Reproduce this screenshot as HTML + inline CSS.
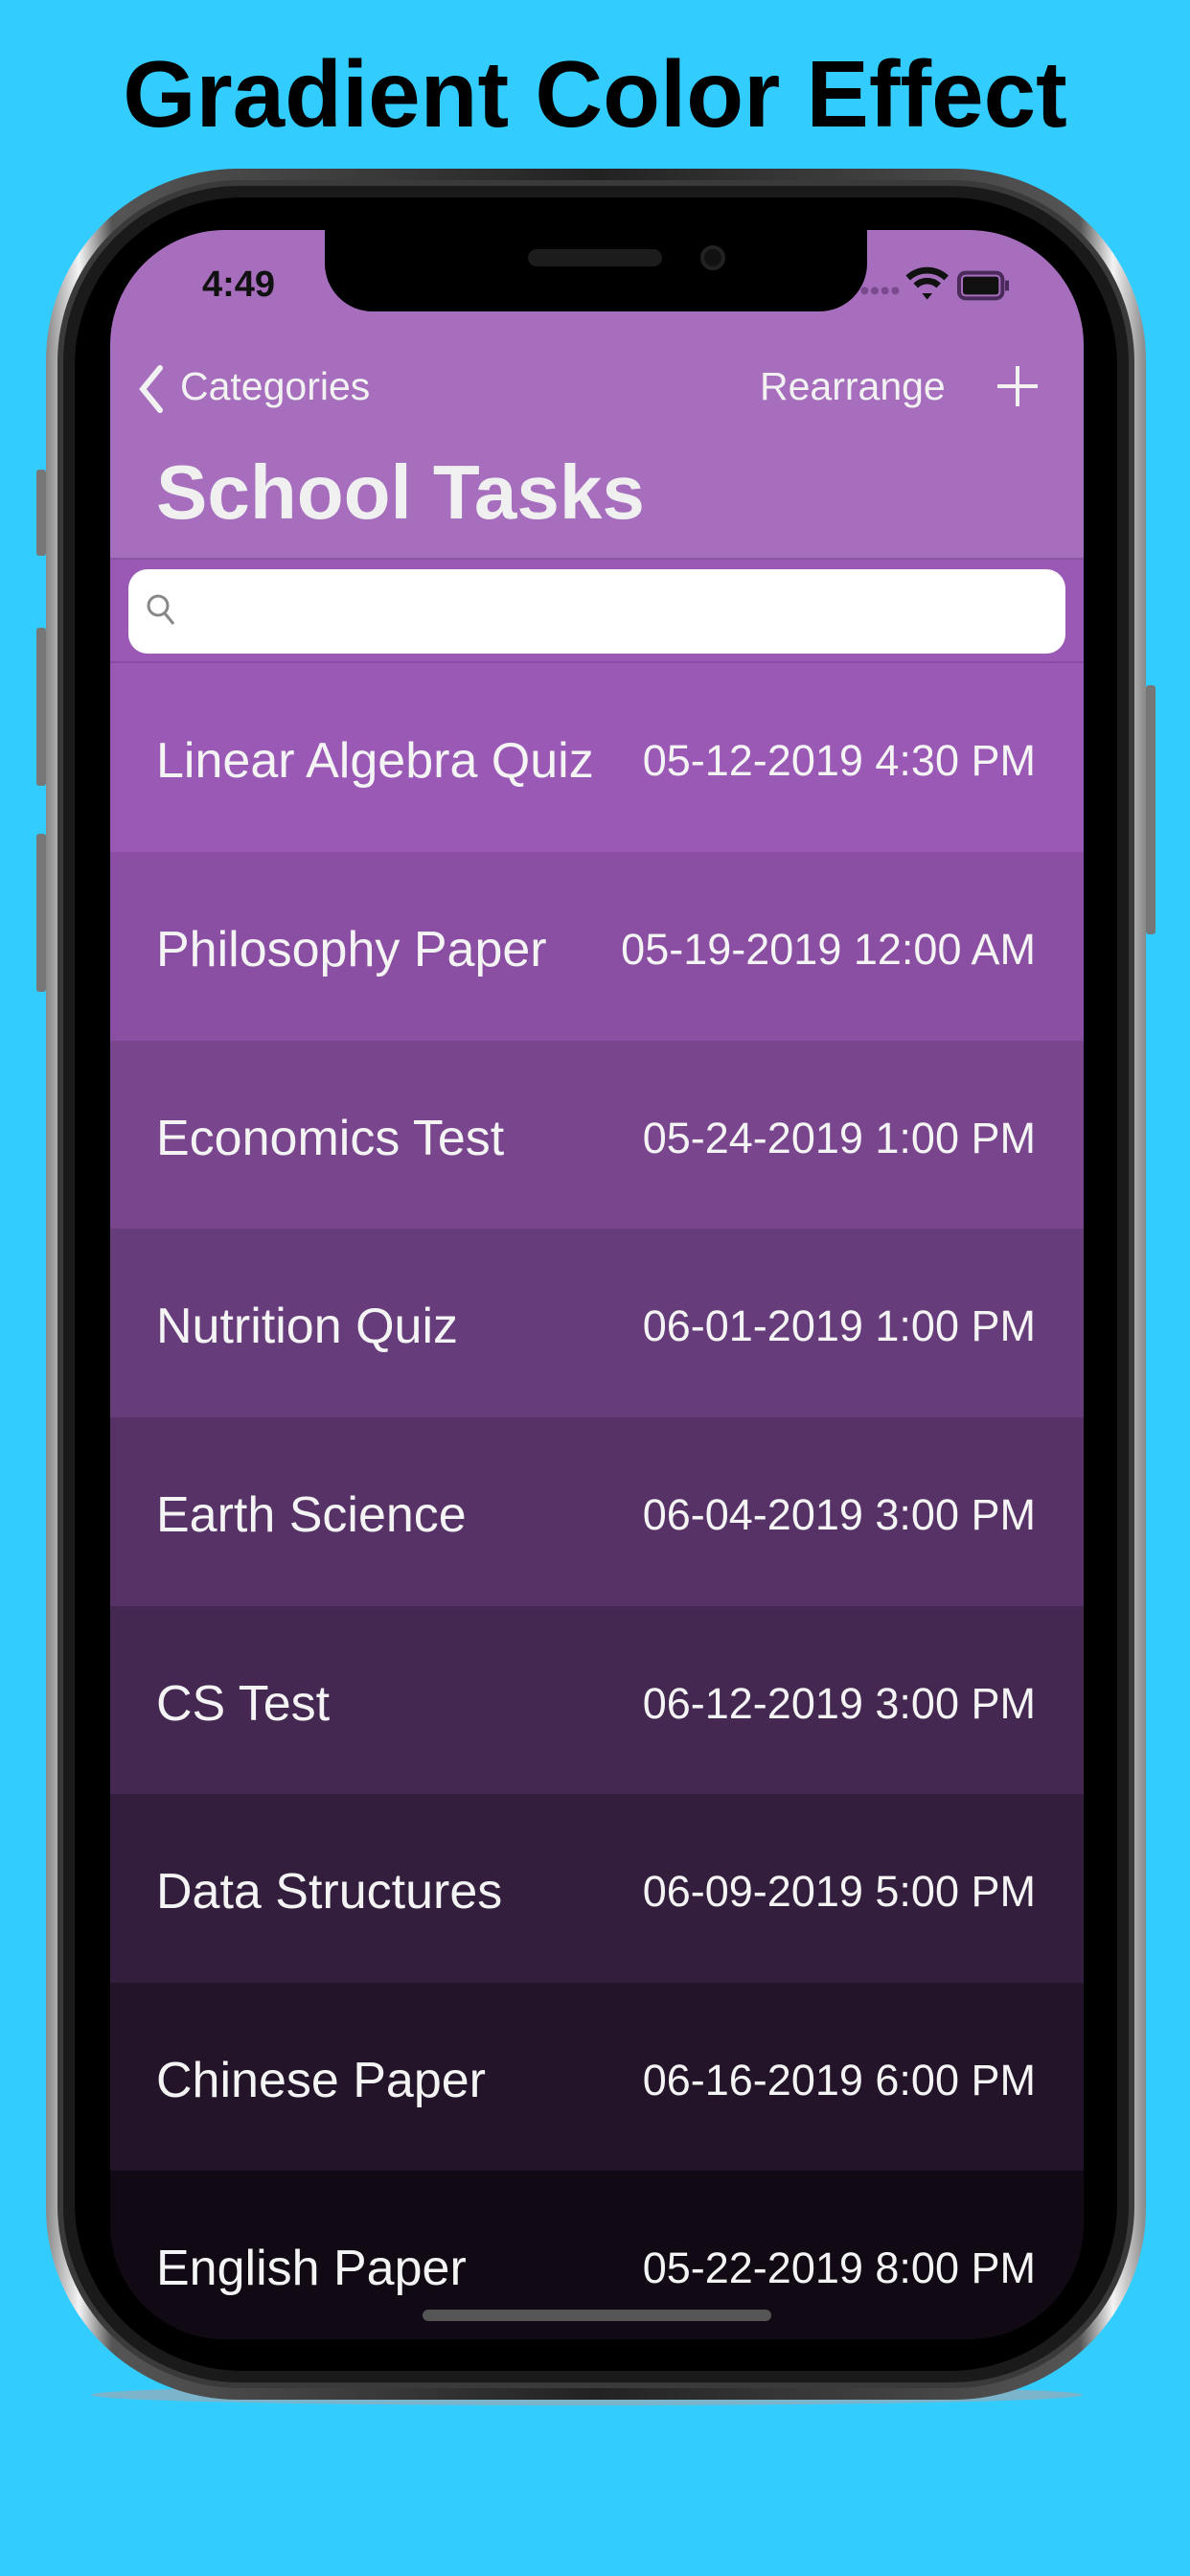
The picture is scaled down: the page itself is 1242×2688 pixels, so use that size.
<!DOCTYPE html>
<html><head><meta charset="utf-8"><style>
*{margin:0;padding:0;box-sizing:border-box}
body{width:1242px;height:2688px;background:#33CCFF;position:relative;overflow:hidden;font-family:"Liberation Sans",sans-serif}
.title{position:absolute;top:42px;left:0;width:1242px;text-align:center;font-weight:bold;font-size:98px;color:#000;letter-spacing:0px}
.shadow{position:absolute;left:95px;top:2488px;width:1035px;height:22px;border-radius:50%;background:#9aaab5;opacity:.7}
.frame{position:absolute;left:48px;top:176px;width:1148px;height:2328px;border-radius:200px;background:linear-gradient(90deg,#888,#f4f4f4 3%,#555 6%,#222 50%,#555 94%,#f4f4f4 97%,#888)}
.frame2{position:absolute;left:60px;top:188px;width:1124px;height:2304px;border-radius:190px;background:#1a1a1a;border:6px solid #3a3a3a}
.frame3{position:absolute;left:78px;top:206px;width:1088px;height:2268px;border-radius:175px;background:#000}
.btn{position:absolute;background:#777;border-radius:3px}
.screen{position:absolute;left:115px;top:240px;width:1016px;height:2201px;border-radius:120px;overflow:hidden;background:#110A14}
.hdr{position:absolute;left:0;top:0;width:1016px;height:344px;background:#A66EBD;border-bottom:2px solid #8c55a3}
.notch{position:absolute;left:224px;top:0;width:566px;height:85px;background:#000;border-radius:0 0 50px 50px}
.spk{position:absolute;left:212px;top:20px;width:140px;height:18px;border-radius:9px;background:#1c1c1c}
.cam{position:absolute;left:392px;top:16px;width:26px;height:26px;border-radius:50%;background:#111;border:4px solid #222}
.time{position:absolute;left:96px;top:36px;font-weight:bold;font-size:38px;color:#111}
.nav{position:absolute;color:#f2f2f2;font-size:41px}
.big{position:absolute;left:48px;top:228px;font-weight:bold;font-size:80px;color:#f0f0f0}
.sbar{position:absolute;left:0;top:344px;width:1016px;height:108px;background:#9B59B6;border-bottom:2px solid #8a4aa5}
.search{position:absolute;left:19px;top:10px;width:978px;height:88px;border-radius:20px;background:#fff}
.row{position:absolute;left:0;width:1016px;height:197px;color:#f4f4f4;font-size:52px}
.row .l{position:absolute;left:48px;top:72px}
.row .r{position:absolute;right:50px;top:76px;font-size:45px}
.home{position:absolute;left:326px;top:2170px;width:364px;height:12px;border-radius:6px;background:#555}
</style></head><body>
<div class="title">Gradient Color Effect</div>
<div class="shadow"></div>
<div class="btn" style="left:38px;top:490px;width:10px;height:90px"></div>
<div class="btn" style="left:38px;top:655px;width:10px;height:165px"></div>
<div class="btn" style="left:38px;top:870px;width:10px;height:165px"></div>
<div class="btn" style="left:1196px;top:715px;width:10px;height:260px"></div>
<div class="frame"></div><div class="frame2"></div><div class="frame3"></div>
<div class="screen">
 <div class="hdr"></div>
 <div class="notch"><div class="spk"></div><div class="cam"></div></div>
 <div class="time">4:49</div>
 <svg style="position:absolute;left:782px;top:34px" width="200" height="48" viewBox="0 0 120 36" preserveAspectRatio="xMinYMin meet">
  <g fill="#7a4a8e"><circle cx="4" cy="22" r="3"/><circle cx="12" cy="22" r="3"/><circle cx="20" cy="22" r="3"/><circle cx="28" cy="22" r="3"/></g>
  <path d="M38 12 A22 22 0 0 1 68 12" stroke="#111" stroke-width="5" fill="none"/>
  <path d="M44 18 A13 13 0 0 1 62 18" stroke="#111" stroke-width="5" fill="none"/>
  <path d="M49 24 L53 29 L57 24 Z" fill="#111"/>
  <rect x="78" y="8" width="34" height="20" rx="5" fill="none" stroke="#4a2a5a" stroke-width="3"/>
  <rect x="81" y="11" width="28" height="14" rx="2" fill="#111"/>
  <rect x="114" y="14" width="3" height="8" fill="#4a2a5a"/>
 </svg>
 <svg style="position:absolute;left:28px;top:140px" width="30" height="52" viewBox="0 0 30 52"><path d="M24 4 L6 26 L24 48" stroke="#f2f2f2" stroke-width="6" fill="none" stroke-linecap="round"/></svg>
 <div class="nav" style="left:73px;top:140px">Categories</div>
 <div class="nav" style="left:678px;top:140px">Rearrange</div>
 <svg style="position:absolute;left:924px;top:140px" width="46" height="46" viewBox="0 0 46 46"><path d="M23 2V44M2 23H44" stroke="#f2f2f2" stroke-width="4"/></svg>
 <div class="big">School Tasks</div>
 <div class="sbar"><div class="search">
  <svg style="position:absolute;left:17px;top:24px" width="40" height="40" viewBox="0 0 40 40"><circle cx="14" cy="14" r="10" stroke="#888" stroke-width="3" fill="none"/><path d="M21 22 L30 33" stroke="#888" stroke-width="3"/></svg>
 </div></div>
 <div class="row" style="top:452px;background:#9B59B6"><span class="l">Linear Algebra Quiz</span><span class="r">05-12-2019 4:30 PM</span></div>
 <div class="row" style="top:649px;background:#8A4FA2"><span class="l">Philosophy Paper</span><span class="r">05-19-2019 12:00 AM</span></div>
 <div class="row" style="top:846px;background:#79468E"><span class="l">Economics Test</span><span class="r">05-24-2019 1:00 PM</span></div>
 <div class="row" style="top:1042px;background:#673C7A"><span class="l">Nutrition Quiz</span><span class="r">06-01-2019 1:00 PM</span></div>
 <div class="row" style="top:1239px;background:#563266"><span class="l">Earth Science</span><span class="r">06-04-2019 3:00 PM</span></div>
 <div class="row" style="top:1436px;background:#452851"><span class="l">CS Test</span><span class="r">06-12-2019 3:00 PM</span></div>
 <div class="row" style="top:1632px;background:#341E3D"><span class="l">Data Structures</span><span class="r">06-09-2019 5:00 PM</span></div>
 <div class="row" style="top:1829px;background:#231429"><span class="l">Chinese Paper</span><span class="r">06-16-2019 6:00 PM</span></div>
 <div class="row" style="top:2025px;background:#110A14"><span class="l">English Paper</span><span class="r">05-22-2019 8:00 PM</span></div>
 <div class="home"></div>
</div>
</body></html>
